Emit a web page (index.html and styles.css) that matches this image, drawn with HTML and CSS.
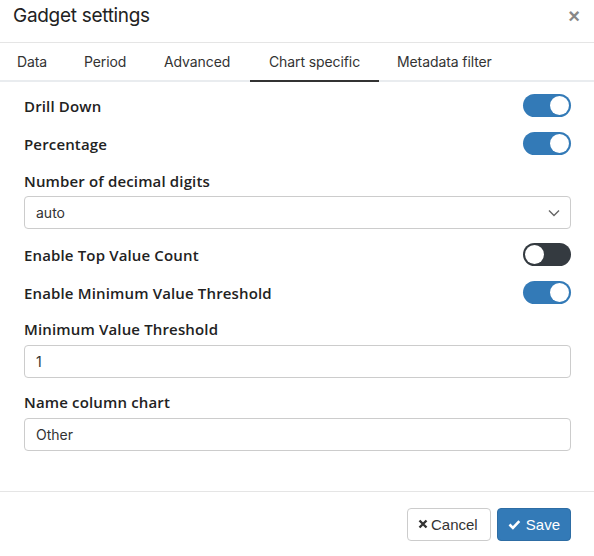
FILE: index.html
```html
<!DOCTYPE html>
<html>
<head>
<meta charset="utf-8">
<link rel="stylesheet" href="styles.css">
</head>
<body>
<div class="modal">
  <div class="header">
    <h1 class="title">Gadget settings</h1>
    <span class="close">×</span>
  </div>
  <div class="tabs">
    <span class="tab t-data">Data</span>
    <span class="tab t-period">Period</span>
    <span class="tab t-adv">Advanced</span>
    <span class="tab t-chart active">Chart specific</span>
    <span class="tab t-meta">Metadata filter</span>
  </div>
  <div class="body">
    <div class="row toggle-row r1">
      <span class="label">Drill Down</span>
      <span class="switch on"><span class="knob"></span></span>
    </div>
    <div class="row toggle-row r2">
      <span class="label">Percentage</span>
      <span class="switch on"><span class="knob"></span></span>
    </div>
    <div class="field f1">
      <span class="label">Number of decimal digits</span>
      <div class="input select">
        <span>auto</span>
        <svg class="chev" width="12" height="8" viewBox="0 0 12 8"><path d="M1 1.5 L6 6.5 L11 1.5" fill="none" stroke="#666" stroke-width="1.4"/></svg>
      </div>
    </div>
    <div class="row toggle-row r3">
      <span class="label">Enable Top Value Count</span>
      <span class="switch off"><span class="knob"></span></span>
    </div>
    <div class="row toggle-row r4">
      <span class="label">Enable Minimum Value Threshold</span>
      <span class="switch on"><span class="knob"></span></span>
    </div>
    <div class="field f2">
      <span class="label">Minimum Value Threshold</span>
      <div class="input"><span>1</span></div>
    </div>
    <div class="field f3">
      <span class="label">Name column chart</span>
      <div class="input"><span>Other</span></div>
    </div>
  </div>
  <div class="footer">
    <button class="btn cancel"><svg width="10" height="10" viewBox="0 0 10 10"><path d="M1.5 1.5 L8.5 8.5 M8.5 1.5 L1.5 8.5" stroke="#333" stroke-width="2.4" stroke-linecap="butt"/></svg>Cancel</button>
    <button class="btn save"><svg width="13" height="11" viewBox="0 0 13 11"><path d="M1.5 5.5 L5 9 L11.5 2" fill="none" stroke="#fff" stroke-width="2.6"/></svg>Save</button>
  </div>
</div>
</body>
</html>
```
FILE: styles.css
```css
* { box-sizing: border-box; }
html, body { margin: 0; padding: 0; background: #fff; }
body { font-family: "Inter", "Noto Sans", sans-serif; color: #222; width: 594px; height: 556px; overflow: hidden; }
.modal { width: 594px; height: 556px; display: flex; flex-direction: column; }
.header { height: 43px; border-bottom: 1px solid #e5e5e5; display: flex; align-items: flex-start; justify-content: space-between; padding: 5px 14px 0 13px; }
.title { margin: 0; font-size: 19px; font-weight: 400; color: #222; letter-spacing: -0.3px; line-height: 22px; }
.close { font-size: 20px; font-weight: 700; color: #888; font-family: "Liberation Sans", sans-serif; line-height: 22px; }
.tabs { height: 39px; border-bottom: 2px solid #e9ecef; display: flex; position: relative; }
.tab { font-size: 14px; color: #333; line-height: 37px; position: absolute; top: 0; letter-spacing: -0.1px; }
.t-data { left: 17px; }
.t-period { left: 84px; }
.t-adv { left: 164px; }
.t-chart { left: 250px; width: 129px; text-align: center; }
.t-meta { left: 397px; }
.tab.active { border-bottom: 2px solid #333; height: 39px; }
.body { padding: 0 23px 0 24px; flex: 1; display: flex; flex-direction: column; }
.label { font-family: "Open Sans", "Noto Sans", sans-serif; font-size: 15px; font-weight: 600; color: #222; letter-spacing: 0.15px; }
.toggle-row { display: flex; justify-content: space-between; align-items: center; height: 23px; }
.r1 { margin-top: 12px; }
.r2 { margin-top: 15px; }
.r3 { margin-top: 14px; }
.r4 { margin-top: 15px; }
.switch { width: 48px; height: 23px; border-radius: 12px; position: relative; display: block; }
.switch.on { background: #337ab7; }
.switch.off { background: #343a40; }
.knob { position: absolute; top: 2px; width: 19px; height: 19px; border-radius: 50%; background: #fff; }
.switch.on .knob { right: 2px; }
.switch.off .knob { left: 2px; }
.field { display: flex; flex-direction: column; }
.field .label { height: 20px; line-height: 20px; margin-bottom: 5px; }
.f1 { margin-top: 16px; }
.f2 { margin-top: 15px; }
.f3 { margin-top: 14px; }
.f2 .label, .f3 .label { margin-bottom: 6px; }
.input { height: 33px; border: 1px solid #ccc; border-radius: 4px; display: flex; align-items: center; justify-content: space-between; padding: 0 10px 0 11px; font-size: 14px; color: #333; }
.chev { margin-right: 0; }
.footer { height: 65px; border-top: 1px solid #e5e5e5; display: flex; justify-content: flex-end; align-items: center; padding: 0 23px 0 0; gap: 6px; margin-top: auto; }
.btn { height: 33px; border-radius: 4px; font-family: "Liberation Sans", Arial, sans-serif; font-size: 15px; display: flex; align-items: center; gap: 3px; padding: 0 10px; cursor: pointer; }
.cancel { background: #fff; border: 1px solid #ccc; color: #333; width: 84px; }
.save { background: #337ab7; border: 1px solid #2e6da4; color: #fff; width: 74px; gap: 5px; }
```
